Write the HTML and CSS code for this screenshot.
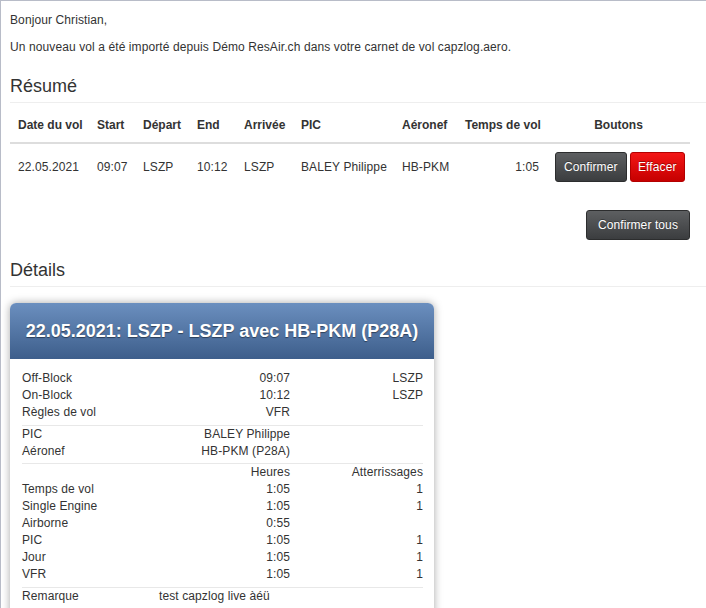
FILE: index.html
```html
<!DOCTYPE html>
<html lang="fr">
<head>
<meta charset="utf-8">
<title>capzlog.aero</title>
<link rel="stylesheet" href="styles.css">
</head>
<body>
<div class="page">
  <p>Bonjour Christian,</p>
  <p>Un nouveau vol a été importé depuis Démo ResAir.ch dans votre carnet de vol capzlog.aero.</p>

  <h3 class="section">Résumé</h3>
  <table class="summary">
    <thead>
      <tr>
        <th class="c1">Date du vol</th>
        <th class="c2">Start</th>
        <th class="c3">Départ</th>
        <th class="c4">End</th>
        <th class="c5">Arrivée</th>
        <th class="c6">PIC</th>
        <th class="c7">Aéronef</th>
        <th class="c8">Temps de vol</th>
        <th class="c9">Boutons</th>
      </tr>
    </thead>
    <tbody>
      <tr>
        <td>22.05.2021</td>
        <td>09:07</td>
        <td>LSZP</td>
        <td>10:12</td>
        <td>LSZP</td>
        <td>BALEY Philippe</td>
        <td>HB-PKM</td>
        <td class="right">1:05</td>
        <td class="center"><a class="btn btn-dark">Confirmer</a> <a class="btn btn-red">Effacer</a></td>
      </tr>
    </tbody>
  </table>
  <div class="all-row"><a class="btn btn-dark btn-wide">Confirmer tous</a></div>

  <h3 class="section details">Détails</h3>
  <div class="card">
    <div class="card-head">22.05.2021: LSZP - LSZP avec HB-PKM (P28A)</div>
    <div class="card-body">
      <table class="info">
        <tr><td class="k">Off-Block</td><td class="v">09:07</td><td class="w">LSZP</td></tr>
        <tr><td class="k">On-Block</td><td class="v">10:12</td><td class="w">LSZP</td></tr>
        <tr><td class="k">Règles de vol</td><td class="v">VFR</td><td class="w"></td></tr>
        <tr class="sep"><td colspan="3"></td></tr>
        <tr><td class="k">PIC</td><td class="v">BALEY Philippe</td><td class="w"></td></tr>
        <tr><td class="k">Aéronef</td><td class="v">HB-PKM (P28A)</td><td class="w"></td></tr>
        <tr class="sep"><td colspan="3"></td></tr>
        <tr><td class="k"></td><td class="v">Heures</td><td class="w">Atterrissages</td></tr>
        <tr><td class="k">Temps de vol</td><td class="v">1:05</td><td class="w">1</td></tr>
        <tr><td class="k">Single Engine</td><td class="v">1:05</td><td class="w">1</td></tr>
        <tr><td class="k">Airborne</td><td class="v">0:55</td><td class="w"></td></tr>
        <tr><td class="k">PIC</td><td class="v">1:05</td><td class="w">1</td></tr>
        <tr><td class="k">Jour</td><td class="v">1:05</td><td class="w">1</td></tr>
        <tr><td class="k">VFR</td><td class="v">1:05</td><td class="w">1</td></tr>
        <tr class="sep"><td colspan="3"></td></tr>
        <tr><td class="k">Remarque</td><td class="rem" colspan="2">test capzlog live àéü</td></tr>
      </table>
    </div>
  </div>
</div>
</body>
</html>
```

FILE: styles.css
```css
* { box-sizing: border-box; }

html, body {
  margin: 0;
  padding: 0;
  background: #fff;
}

body {
  font-family: "Liberation Sans", Arial, sans-serif;
  font-size: 12px;
  line-height: 17px;
  letter-spacing: 0.1px;
  color: #333;
}

.page {
  border-top: 1px solid #b8bcc8;
  border-left: 1px solid #b8bcc8;
  padding: 11px 0 40px 9px;
  min-height: 700px;
}

p {
  margin: 0 0 10px;
}

.section {
  font-size: 18px;
  font-weight: normal;
  line-height: 20px;
  letter-spacing: 0;
  margin: 20px 0 6px;
  padding-bottom: 6px;
  border-bottom: 1px solid #eeeeee;
  color: #333;
}

.section.details {
  margin-bottom: 16px;
}

.summary {
  width: 680px;
  border-collapse: collapse;
  table-layout: fixed;
}

.summary th {
  text-align: left;
  font-weight: bold;
  letter-spacing: 0;
  padding: 8px;
  border-bottom: 2px solid #dddddd;
  white-space: nowrap;
}

.summary td {
  padding: 8px;
  white-space: nowrap;
  vertical-align: middle;
}

.summary .c1 { width: 79px; }
.summary .c2 { width: 46px; }
.summary .c3 { width: 54px; }
.summary .c4 { width: 47px; }
.summary .c5 { width: 57px; }
.summary .c6 { width: 101px; }
.summary .c7 { width: 63px; }
.summary .c8 { width: 90px; }
.summary .c9 { width: 143px; text-align: center; }

.summary .right { text-align: right; }
.summary .center { text-align: center; }

.btn {
  display: inline-block;
  height: 30px;
  line-height: 28px;
  padding: 0 8px;
  font-size: 12px;
  color: #fff;
  border-radius: 3px;
  text-decoration: none;
  text-shadow: 0 -1px 0 rgba(0, 0, 0, 0.35);
  vertical-align: middle;
}

.btn-dark {
  background: linear-gradient(#5d5f61, #3b3d3f);
  border: 1px solid #2c2d2e;
}

.btn-red {
  padding: 0 7px;
  background: linear-gradient(#f31616, #c60000);
  border: 1px solid #b30000;
}

.btn-wide {
  padding: 0 11px;
}

.all-row {
  width: 680px;
  text-align: right;
  margin-top: 20px;
}

.card {
  width: 424px;
  border-radius: 6px 6px 0 0;
  box-shadow: 0 0 9px rgba(0, 0, 0, 0.35);
  background: #fff;
}

.card-head {
  height: 56px;
  line-height: 56px;
  text-align: center;
  color: #fff;
  font-size: 18px;
  font-weight: bold;
  letter-spacing: 0;
  border-radius: 6px 6px 0 0;
  background: linear-gradient(#6b8fbf, #3d5e8b);
  text-shadow: 0 1px 1px rgba(0, 0, 0, 0.45);
}

.card-body {
  padding: 11px 11px 20px 12px;
}

.info {
  width: 401px;
  border-collapse: collapse;
  table-layout: fixed;
}

.info td {
  padding: 0;
  line-height: 17px;
  white-space: nowrap;
}

.info .k { width: 137px; text-align: left; }
.info .v { width: 131px; text-align: right; }
.info .w { width: 133px; text-align: right; }
.info .rem { text-align: left; }

.info .sep td {
  height: 4px;
  padding: 0;
  line-height: 0;
  border-bottom: 1px solid #e8e8e8;
}
```
